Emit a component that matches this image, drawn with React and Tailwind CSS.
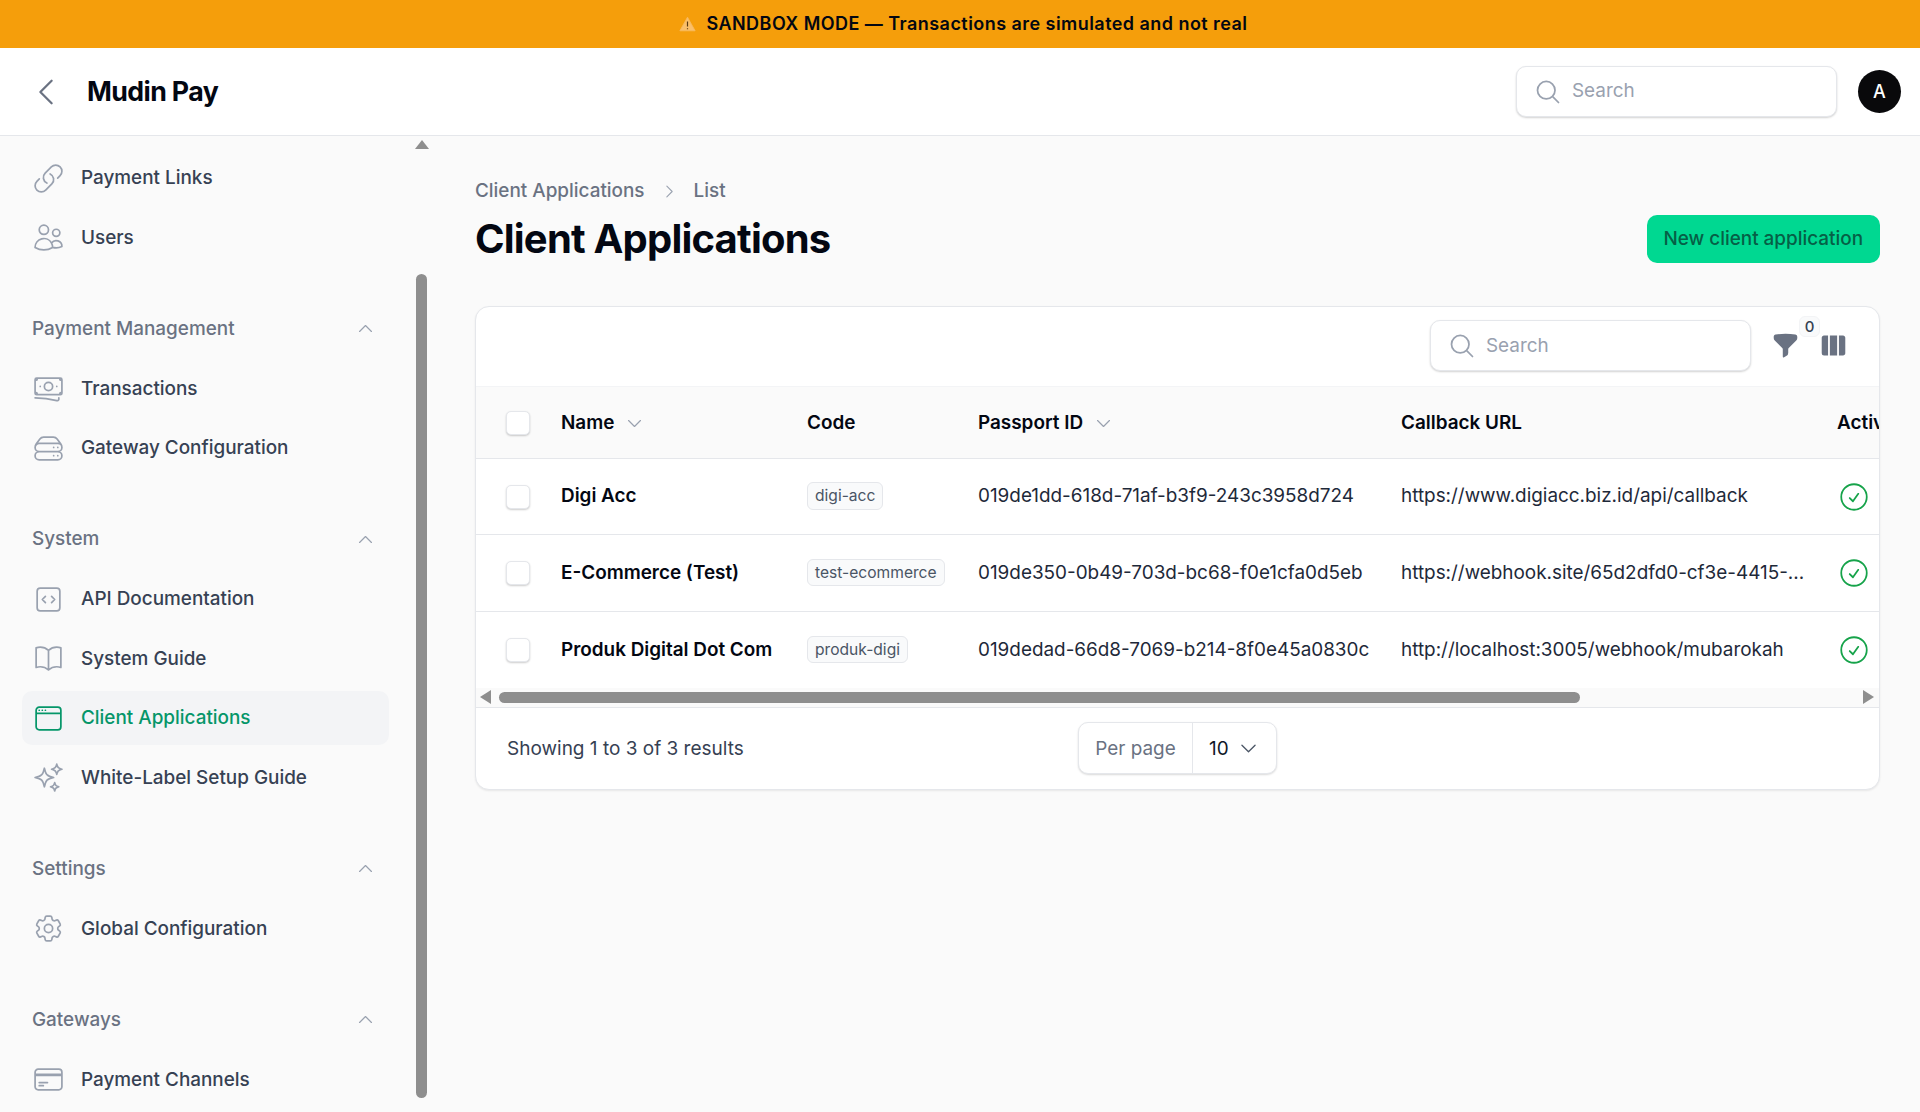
import React from 'react';
import {
    HiOutlineLink,
    HiOutlineUsers,
    HiOutlineBanknotes,
    HiOutlineServerStack,
    HiOutlineCodeBracketSquare,
    HiOutlineBookOpen,
    HiOutlineWindow,
    HiOutlineSparkles,
    HiOutlineCog6Tooth,
    HiOutlineCreditCard,
    HiOutlineChevronUp,
    HiOutlineChevronLeft,
    HiOutlineChevronRight,
    HiOutlineChevronDown,
    HiOutlineMagnifyingGlass,
    HiOutlineCheckCircle,
    HiFunnel,
    HiViewColumns,
} from 'react-icons/hi2';

const navGroups = [
    {
        items: [
            { label: 'Payment Links', icon: HiOutlineLink },
            { label: 'Users', icon: HiOutlineUsers },
        ],
    },
    {
        title: 'Payment Management',
        items: [
            { label: 'Transactions', icon: HiOutlineBanknotes },
            { label: 'Gateway Configuration', icon: HiOutlineServerStack },
        ],
    },
    {
        title: 'System',
        items: [
            { label: 'API Documentation', icon: HiOutlineCodeBracketSquare },
            { label: 'System Guide', icon: HiOutlineBookOpen },
            { label: 'Client Applications', icon: HiOutlineWindow, active: true },
            { label: 'White-Label Setup Guide', icon: HiOutlineSparkles },
        ],
    },
    {
        title: 'Settings',
        items: [{ label: 'Global Configuration', icon: HiOutlineCog6Tooth }],
    },
    {
        title: 'Gateways',
        items: [{ label: 'Payment Channels', icon: HiOutlineCreditCard }],
    },
];

const rows = [
    {
        name: 'Digi Acc',
        code: 'digi-acc',
        passport: '019de1dd-618d-71af-b3f9-243c3958d724',
        url: 'https://www.digiacc.biz.id/api/callback',
    },
    {
        name: 'E-Commerce (Test)',
        code: 'test-ecommerce',
        passport: '019de350-0b49-703d-bc68-f0e1cfa0d5eb',
        url: 'https://webhook.site/65d2dfd0-cf3e-4415-...',
    },
    {
        name: 'Produk Digital Dot Com',
        code: 'produk-digi',
        passport: '019dedad-66d8-7069-b214-8f0e45a0830c',
        url: 'http://localhost:3005/webhook/mubarokah',
    },
];

const SearchBox = () => (
    <div className="flex h-[51px] w-[321px] shrink-0 items-center gap-[10px] rounded-[10px] border border-gray-200 bg-white pl-[17px] shadow-[0_1px_2px_rgba(0,0,0,0.18)]">
        <HiOutlineMagnifyingGlass className="h-[28px] w-[28px] text-gray-400" />
        <input
            readOnly
            placeholder="Search"
            className="w-[220px] bg-transparent text-[18.9px] outline-none placeholder:text-gray-400"
        />
    </div>
);

const Checkbox = () => (
    <div className="h-[24px] w-[24px] rounded-[5px] border border-gray-200 bg-white shadow-[0_1px_2px_rgba(0,0,0,0.2)]"></div>
);

const Sidebar = () => (
    <aside className="flex w-[432px] shrink-0 overflow-hidden">
        <nav className="flex w-[411px] shrink-0 flex-col gap-[52px] px-[22px] pt-[15px]">
            {navGroups.map((group, index) => (
                <div key={index}>
                    {group.title && (
                        <div className="mb-[21px] flex h-[24px] items-center justify-between pl-[10px] pr-[14px]">
                            <span className="pt-[1px] text-[18.9px] font-medium text-gray-500">{group.title}</span>
                            <HiOutlineChevronUp className="h-[19px] w-[19px] text-gray-400" />
                        </div>
                    )}
                    <div className="flex flex-col gap-[5.5px]">
                        {group.items.map((item) => {
                            const Icon = item.icon;
                            return (
                                <div
                                    key={item.label}
                                    className={`flex h-[54px] items-center gap-[16px] rounded-[10px] pl-[10px] ${item.active ? 'bg-gray-100' : ''}`}
                                >
                                    <Icon strokeWidth={1.25} className={`h-[33px] w-[33px] shrink-0 ${item.active ? 'text-[#059669]' : 'text-gray-400'}`} />
                                    <span className={`pt-[1px] text-[18.9px] font-medium ${item.active ? 'text-[#059669]' : 'text-gray-700'}`}>
                                        {item.label}
                                    </span>
                                </div>
                            );
                        })}
                    </div>
                </div>
            ))}
        </nav>
        {/* sidebar scrollbar */}
        <div className="flex w-[21px] flex-col items-center pt-[4px]">
            <div className="h-0 w-0 border-x-[7px] border-b-[9px] border-x-transparent border-b-[#8e8e8e]"></div>
            <div className="mt-[125px] h-[824px] w-[11px] rounded-full bg-[#8e8e8e]"></div>
        </div>
    </aside>
);

const ClientTable = () => (
    <div className="rounded-[14px] border border-gray-200 bg-white shadow-[0_1px_2px_rgba(0,0,0,0.08)]">
        <div className="flex h-[80px] items-center justify-end border-b border-gray-100 pb-[2px] pr-[31px]">
            <SearchBox />
            <div className="relative ml-[20px] mr-[9px]">
                <HiFunnel className="h-[29px] w-[29px] text-gray-500" />
                <span className="absolute -right-[20px] -top-[15px] flex h-[21px] w-[21px] items-center justify-center rounded-[6px] border border-gray-100 bg-gray-50 text-[15px] font-medium text-gray-700">
                    0
                </span>
            </div>
            <HiViewColumns className="ml-[10px] h-[29px] w-[29px] text-gray-500" />
        </div>

        <div className="overflow-hidden">
            <table className="w-[1500px] table-fixed text-left text-[18.9px]">
                <colgroup>
                    <col className="w-[85px]" />
                    <col className="w-[246px]" />
                    <col className="w-[171px]" />
                    <col className="w-[423px]" />
                    <col className="w-[436px]" />
                    <col className="w-[139px]" />
                </colgroup>
                <thead>
                    <tr className="h-[71px] border-b border-gray-200 bg-[#fafafa] font-semibold text-gray-950">
                        <th className="pl-[30px]"><Checkbox /></th>
                        <th className="pt-[1px] font-semibold">
                            <span className="flex items-center gap-[11px]">Name <HiOutlineChevronDown className="h-[19px] w-[19px] text-gray-400" /></span>
                        </th>
                        <th className="pt-[1px] font-semibold">Code</th>
                        <th className="pt-[1px] font-semibold">
                            <span className="flex items-center gap-[11px]">Passport ID <HiOutlineChevronDown className="h-[19px] w-[19px] text-gray-400" /></span>
                        </th>
                        <th className="pt-[1px] font-semibold">Callback URL</th>
                        <th className="pt-[1px] font-semibold">Active</th>
                    </tr>
                </thead>
                <tbody>
                    {rows.map((row, index) => (
                        <tr key={row.code} className={`h-[76.5px] ${index < rows.length - 1 ? 'border-b border-gray-200' : ''}`}>
                            <td className="pl-[30px]"><Checkbox /></td>
                            <td className="font-semibold text-gray-950">{row.name}</td>
                            <td className="pb-[2px]">
                                <span className="inline-block rounded-[6px] border border-gray-200 bg-gray-50 px-[7px] py-[1px] text-[15.6px] text-gray-600">
                                    {row.code}
                                </span>
                            </td>
                            <td className="whitespace-nowrap text-gray-800">{row.passport}</td>
                            <td className="whitespace-nowrap text-gray-800">{row.url}</td>
                            <td><HiOutlineCheckCircle strokeWidth={1.25} className="h-[34px] w-[34px] text-[#16a34a]" /></td>
                        </tr>
                    ))}
                </tbody>
            </table>
        </div>

        {/* horizontal scrollbar */}
        <div className="flex h-[20px] items-center border-b border-gray-200 bg-[#fafafa] pl-[4px] pr-[5px]">
            <div className="h-0 w-0 border-y-[7px] border-r-[11px] border-y-transparent border-r-[#8e8e8e]"></div>
            <div className="ml-[8px] h-[11px] w-[1081px] rounded-full bg-[#8e8e8e]"></div>
            <div className="ml-auto h-0 w-0 border-y-[7px] border-l-[11px] border-y-transparent border-l-[#8e8e8e]"></div>
        </div>

        <div className="flex h-[81px] items-center pl-[31px]">
            <span className="w-[571px] pt-[1px] text-[19px] text-gray-700">Showing 1 to 3 of 3 results</span>
            <div className="flex h-[52px] w-[199px] items-center rounded-[10px] border border-gray-200 bg-white text-[18.9px] shadow-[0_1px_2px_rgba(0,0,0,0.15)]">
                <span className="flex h-full w-[114px] items-center justify-center border-r border-gray-200 pt-[1px] text-gray-500">Per page</span>
                <span className="flex flex-1 items-center justify-between pl-[16px] pr-[17px] pt-[1px] text-gray-900">
                    10
                    <HiOutlineChevronDown className="h-[21px] w-[21px] text-gray-600" />
                </span>
            </div>
        </div>
    </div>
);

const App = () => {
    return (
        <div className="flex h-screen flex-col overflow-hidden bg-[#fafafa] font-['Inter',sans-serif]">
            <div className="flex h-[48px] shrink-0 items-center justify-center gap-[10px] bg-[#f59e0b] pb-[2px] pl-[7px] text-[18px] font-semibold tracking-[0.45px] text-gray-950">
                <svg viewBox="0 0 20 18" className="mt-[2px] h-[16px] w-[17px]">
                    <path d="M10 1 L19 17 H1 Z" fill="#fbbf6a" stroke="#f7b95e" strokeLinejoin="round" />
                    <path d="M10 6 V12 M10 14 V15.2" stroke="#5b3a10" strokeWidth="1.4" />
                </svg>
                SANDBOX MODE — Transactions are simulated and not real
            </div>

            <header className="flex h-[88px] shrink-0 items-center border-b border-gray-200 bg-white pl-[28px] pr-[19px]">
                <HiOutlineChevronLeft className="h-[36px] w-[36px] text-gray-500" />
                <span className="ml-[23px] text-[26.7px] font-bold tracking-[-0.6px] text-gray-950">Mudin Pay</span>
                <div className="ml-auto"><SearchBox /></div>
                <div className="ml-[21px] flex h-[43px] w-[43px] items-center justify-center rounded-full bg-[#09090b] text-[18px] font-medium text-white">
                    A
                </div>
            </header>

            <div className="flex min-h-0 flex-1">
                <Sidebar />
                <main className="min-w-0 flex-1 pl-[43px] pr-[40px] pt-[41px]">
                    <div className="flex items-center gap-[16px] text-[18.9px] font-medium text-gray-500">
                        <span>Client Applications</span>
                        <HiOutlineChevronRight className="h-[17px] w-[17px] text-gray-400" />
                        <span>List</span>
                    </div>
                    <div className="mb-[43px] mt-[10px] flex h-[48px] items-center justify-between">
                        <h1 className="text-[40px] font-bold tracking-[-0.8px] text-gray-950">Client Applications</h1>
                        <button className="h-[48px] rounded-[10px] bg-[#00d891] px-[17px] text-[18.9px] font-medium text-[#065f46]">
                            New client application
                        </button>
                    </div>
                    <ClientTable />
                </main>
            </div>
        </div>
    );
};

export default App;
